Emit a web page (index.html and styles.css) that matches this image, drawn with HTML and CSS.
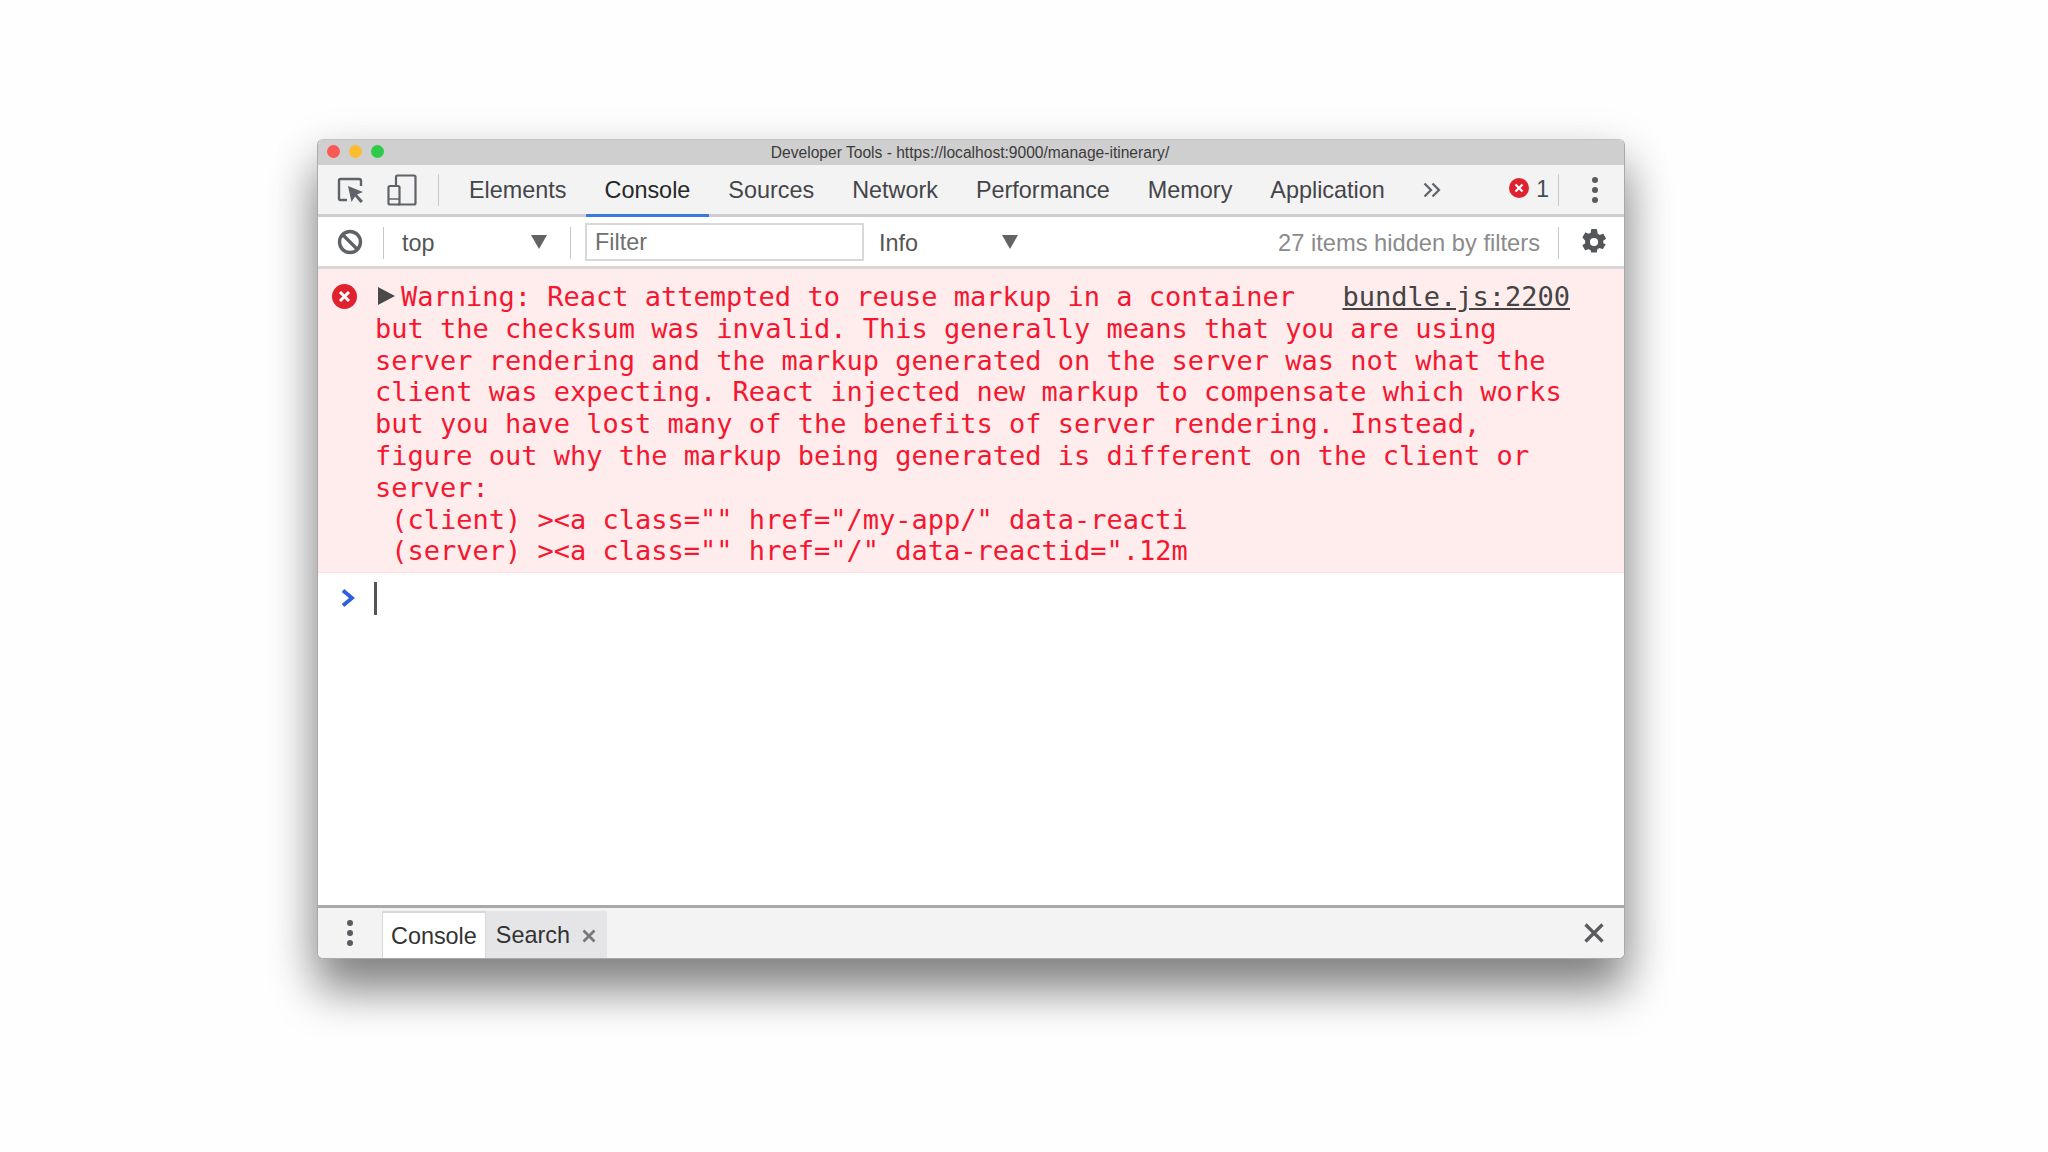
FILE: index.html
```html
<!DOCTYPE html>
<html lang="en">
<head>
<meta charset="utf-8">
<title>Developer Tools</title>
<link rel="stylesheet" href="styles.css">
</head>
<body>
<div class="window">
  <div class="titlebar">
    <div class="lights"><i class="light red"></i><i class="light yellow"></i><i class="light green"></i></div>
    <span class="title">Developer Tools - https://localhost:9000/manage-itinerary/</span>
  </div>
  <div class="toolbar">
    <div class="tool-icons">
      <svg class="icon" width="30" height="30" viewBox="0 0 30 30" fill="none"><path d="M11 25H4.500Q3 25 3 23.500V5.500Q3 4 4.500 4H23Q25 4 25 6V11" stroke="#5f6368" stroke-width="2.400"/><path d="M12 11L27 17L21 19.500L27 26L24.500 28L19 21.500L15.500 27Z" fill="#5f6368"/></svg>
      <svg class="icon" width="30" height="32" viewBox="0 0 30 32" fill="none"><path d="M9 12V3Q9 1.500 10.500 1.500H27Q28.500 1.500 28.500 3V29Q28.500 30.500 27 30.500H11" stroke="#5f6368" stroke-width="2.200"/><rect x="1.500" y="12" width="11" height="18.500" rx="1.500" stroke="#5f6368" stroke-width="2.200"/><path d="M2 25H12" stroke="#5f6368" stroke-width="1.600"/></svg>
    </div>
    <span class="sep sep-tools"></span>
    <nav class="tabs">
      <span class="tab">Elements</span>
      <span class="tab active">Console</span>
      <span class="tab">Sources</span>
      <span class="tab">Network</span>
      <span class="tab">Performance</span>
      <span class="tab">Memory</span>
      <span class="tab">Application</span>
    </nav>
    <svg class="more" width="18" height="16" viewBox="0 0 18 16" fill="none" stroke="#5f6368" stroke-width="2.200"><path d="M1.500 1.500L8 8L1.500 14.500M9.500 1.500L16 8L9.500 14.500"/></svg>
    <div class="errors">
      <svg class="err-small" width="20" height="20" viewBox="0 0 20 20"><circle cx="10" cy="10" r="10" fill="#e0222f"/><path d="M6.500 6.500L13.500 13.500M13.500 6.500L6.500 13.500" stroke="#fff" stroke-width="2.200"/></svg>
      <span class="err-count">1</span>
    </div>
    <span class="sep sep-err"></span>
    <span class="dots"><i></i><i></i><i></i></span>
  </div>
  <div class="filterbar">
    <svg class="clear" width="26" height="26" viewBox="0 0 26 26" fill="none" stroke="#5f6368" stroke-width="3.400"><circle cx="13" cy="13" r="10.500"/><path d="M5.500 5.500L20.500 20.500"/></svg>
    <span class="sep sep-clear"></span>
    <div class="select select-top"><span>top</span><i class="caret"></i></div>
    <span class="sep sep-select"></span>
    <div class="filter">Filter</div>
    <div class="select select-info"><span>Info</span><i class="caret"></i></div>
    <span class="hidden-count">27 items hidden by filters</span>
    <span class="sep sep-count"></span>
    <svg class="gear" width="28" height="28" viewBox="0 0 24 24"><path fill="#55565a" fill-rule="evenodd" d="M19.400 13c.04-.33.06-.66.06-1s-.02-.67-.06-1l2.150-1.650c.2-.15.25-.42.12-.65l-2.040-3.500c-.12-.23-.4-.3-.62-.23l-2.530 1c-.53-.4-1.100-.73-1.720-.98L14 1.320C13.970 1.100 13.760.9 13.500.9h-4c-.25 0-.47.2-.5.420l-.38 2.650c-.62.25-1.200.6-1.720.98l-2.530-1c-.23-.08-.5 0-.62.23L1.700 7.700c-.13.220-.07.500.12.650L3.970 11c-.04.330-.07.670-.07 1s.03.670.07 1l-2.150 1.650c-.2.150-.25.420-.12.650l2.050 3.500c.12.230.4.300.62.230l2.530-1c.52.400 1.100.730 1.720.980L9 20.680c.03.220.25.420.5.420h4c.26 0 .47-.2.500-.42l.38-2.650c.62-.25 1.200-.58 1.720-.98l2.530 1c.22.080.5 0 .62-.23l2.040-3.500c.13-.23.080-.5-.12-.65L19.400 13zM11.500 15.500a3.500 3.500 0 1 1 0-7 3.500 3.500 0 0 1 0 7z" transform="translate(.5 0)"/></svg>
  </div>
  <div class="console">
    <div class="message">
      <svg class="err-big" width="25" height="25" viewBox="0 0 25 25"><circle cx="12.500" cy="12.500" r="12.500" fill="#e0222f"/><path d="M8 8L17 17M17 8L8 17" stroke="#fff" stroke-width="3"/></svg>
      <i class="expand"></i>
      <a class="source">bundle.js:2200</a>
      <pre class="text"><span class="first">Warning: React attempted to reuse markup in a container</span>
but the checksum was invalid. This generally means that you are using
server rendering and the markup generated on the server was not what the
client was expecting. React injected new markup to compensate which works
but you have lost many of the benefits of server rendering. Instead,
figure out why the markup being generated is different on the client or
server:
 (client) &gt;&lt;a class="" href="/my-app/" data-reacti
 (server) &gt;&lt;a class="" href="/" data-reactid=".12m</pre>
    </div>
    <div class="prompt">
      <svg width="16" height="20" viewBox="0 0 16 20" fill="none" stroke="#2b5fe0" stroke-width="3.800"><path d="M3 2.500L12 10L3 17.500"/></svg>
      <span class="cursor"></span>
    </div>
  </div>
  <div class="drawer">
    <span class="dots drawer-dots"><i></i><i></i><i></i></span>
    <div class="drawer-tabs">
      <span class="dtab dtab-active">Console</span>
      <span class="dtab dtab-search">Search<svg class="dclose" width="14" height="14" viewBox="0 0 14 14" stroke="#77787b" stroke-width="2.800"><path d="M1.500 1.500L12.500 12.500M12.500 1.500L1.500 12.500"/></svg></span>
    </div>
    <svg class="drawer-close" width="20" height="20" viewBox="0 0 20 20" stroke="#5a5b5e" stroke-width="3.200"><path d="M1.500 1.500L18.500 18.500M18.500 1.500L1.500 18.500"/></svg>
  </div>
</div>
</body>
</html>
```
FILE: styles.css
```css
* { box-sizing: border-box; }
html, body { margin: 0; height: 100%; }
body {
  background: #fefefe;
  padding: 139px 0 0 317px;
  font-family: "Liberation Sans", Arial, sans-serif;
  overflow: hidden;
}
.window {
  width: 1308px;
  height: 820px;
  display: flex;
  flex-direction: column;
  border: 1px solid #a9a9a9;
  border-top-color: #c4c4c4;
  border-radius: 6px;
  overflow: hidden;
  background: #fff;
  box-shadow: 0 32px 46px rgba(0,0,0,.42), 0 14px 50px rgba(0,0,0,.16);
}
.titlebar {
  height: 25px;
  flex: none;
  position: relative;
  background: #cfcfcf;
  display: flex;
  align-items: center;
  justify-content: center;
}
.lights { position: absolute; left: 9px; top: 5px; display: flex; gap: 9px; }
.light { width: 13px; height: 13px; border-radius: 50%; display: block; }
.red { background: #fb5a54; }
.yellow { background: #fbbc33; }
.green { background: #2ecb49; }
.title { font-size: 15.600px; color: #3b3b3b; padding-right: 2px; }
.toolbar {
  height: 52px;
  flex: none;
  display: flex;
  align-items: center;
  background: #f3f3f4;
  border-bottom: 3px solid #cdcdcf;
  position: relative;
}
.tool-icons { display: flex; align-items: center; margin-left: 18px; gap: 21px; }
.icon { display: block; }
.sep { display: block; width: 1px; height: 32px; background: #c8c8ca; flex: none; }
.sep-tools { margin-left: 21px; }
.tabs { display: flex; height: 49px; margin-left: 11px; align-self: flex-start; }
.tab {
  font-size: 23.400px;
  color: #444548;
  padding: 0 19px;
  line-height: 51px;
  position: relative;
  white-space: nowrap;
}
.tab.active { color: #26272a; }
.tab.active::after {
  content: "";
  position: absolute;
  left: 0; right: 0; bottom: -3px;
  height: 3px;
  background: #3b78e7;
}
.more { margin-left: 19px; flex: none; }
.errors { margin-left: auto; display: flex; align-items: center; gap: 7px; }
.err-small { display: block; margin-top: -3px; }
.err-count { font-size: 23px; color: #414d5a; }
.sep-err { margin-left: 9px; }
.dots { display: flex; flex-direction: column; gap: 4px; margin-left: 33px; margin-right: 26px; }
.dots i { display: block; width: 6px; height: 6px; border-radius: 50%; background: #5a5b5e; }
.filterbar {
  height: 52px;
  flex: none;
  display: flex;
  align-items: center;
  background: #fff;
  border-bottom: 3px solid #d8d8d8;
  font-size: 23.400px;
  color: #555;
  line-height: 28px;
}
.filterbar span { position: relative; top: 1px; }
.clear { margin-left: 19px; flex: none; }
.sep-clear { margin-left: 20px; }
.select { display: flex; align-items: center; justify-content: space-between; flex: none; }
.select-top { width: 145px; margin-left: 18px; margin-right: 23px; }
.select-info { width: 139px; margin-left: 15px; }
.caret {
  width: 0; height: 0; display: block;
  border-left: 8px solid transparent;
  border-right: 8px solid transparent;
  border-top: 14px solid #636365;
}
.filter {
  width: 279px;
  height: 38px;
  margin-left: 14px;
  border: 2px solid #d8d8d8;
  padding-left: 8px;
  line-height: 35px;
  color: #707070;
  flex: none;
}
.hidden-count { margin-left: auto; color: #8b8b8b; white-space: nowrap; font-size: 23.700px; }
.sep-count { margin-left: 18px; }
.gear { margin-left: 21px; margin-right: 16px; display: block; flex: none; }
.console { flex: 1; min-height: 0; background: #fff; }
.message {
  position: relative;
  height: 304px;
  padding: 12px 0 0 57px;
  background: #ffeded;
  border-bottom: 1px solid #ffdfdf;
  font-family: "DejaVu Sans Mono", "Liberation Mono", monospace;
  font-size: 27px;
  line-height: 31.800px;
  color: #f5172f;
}
.text { margin: 0; font: inherit; }
.first { padding-left: 26px; }
.err-big { position: absolute; left: 14px; top: 15px; }
.expand {
  position: absolute;
  left: 60px; top: 18px;
  width: 0; height: 0;
  border-top: 9px solid transparent;
  border-bottom: 9px solid transparent;
  border-left: 17px solid #4a4a4a;
}
.source {
  position: absolute;
  right: 54px; top: 12px;
  color: #444;
  text-decoration: underline;
}
.prompt { position: relative; height: 50px; display: flex; align-items: center; padding-left: 22px; gap: 18px; }
.prompt svg { display: block; }
.cursor { display: block; width: 3px; height: 33px; background: #555; }
.drawer {
  height: 53px;
  flex: none;
  display: flex;
  align-items: flex-end;
  background: #f3f3f4;
  border-top: 3px solid #a9a9a9;
}
.drawer-dots { margin: 0 0 12px 29px; }
.drawer-tabs { display: flex; height: 47px; margin-left: 29px; }
.dtab {
  font-size: 23.400px;
  color: #333;
  padding: 0 9px;
  line-height: 47px;
  display: flex;
  align-items: center;
  background: #e5e5e7;
  white-space: nowrap;
}
.dtab-search { padding: 2px 11px 0 10px; }
.dtab-active {
  background: #fff;
  border: 2px solid #d8d8d8;
  border-width: 2px 1px 0 1px;
  line-height: 44px;
  padding: 0 8px;
}
.dclose { margin-left: 12px; margin-right: 0; display: block; }
.drawer-close { margin: 0 20px 15px auto; display: block; }
```
